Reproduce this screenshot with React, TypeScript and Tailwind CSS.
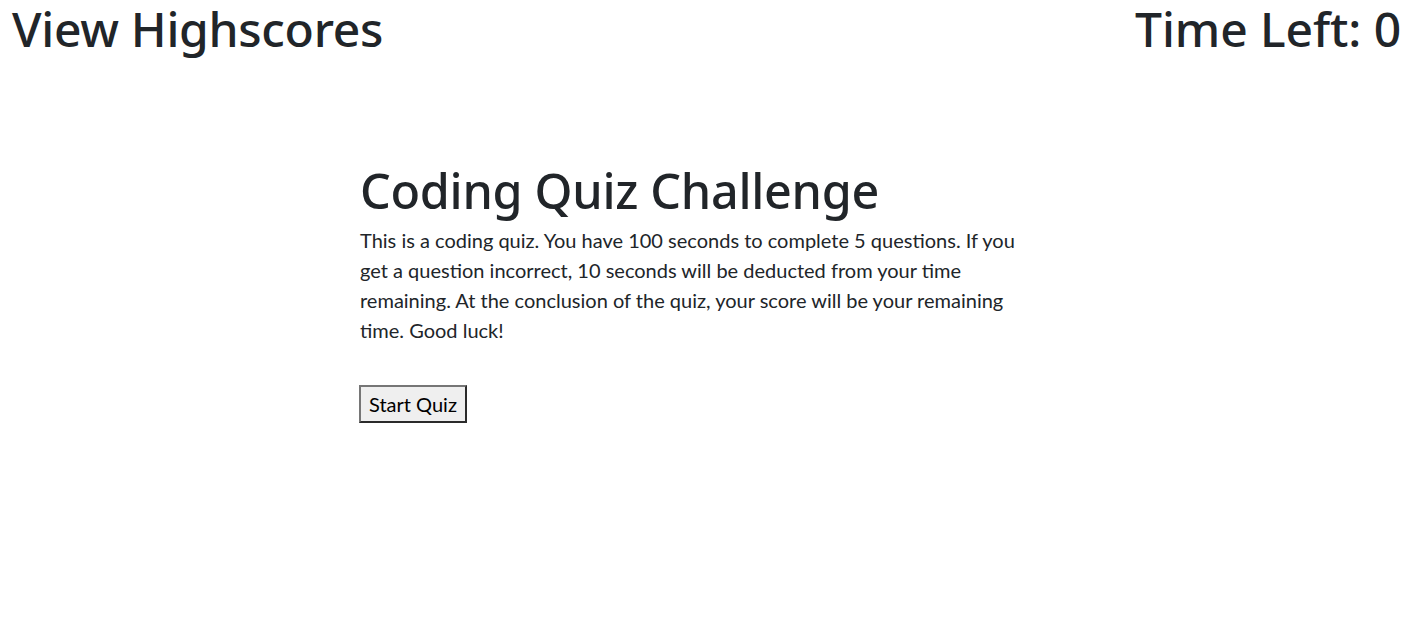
import React from 'react';

const App: React.FC = () => {
  return (
    <div className="min-h-screen bg-white text-[#212529] font-['Lato',sans-serif]">
      <header className="flex items-start justify-between px-3">
        <h1 className="font-['Noto_Sans',sans-serif] font-medium text-[48px] leading-[1.2] tracking-[-0.3px]">View Highscores</h1>
        <h1 className="font-['Noto_Sans',sans-serif] font-medium text-[48px] leading-[1.2] tracking-[-0.1px]">Time Left: 0</h1>
      </header>

      <main className="flex justify-center">
        <div className="w-[693px] pt-[103px]">
          <h1 className="font-['Noto_Sans',sans-serif] font-medium text-[48.5px] leading-[1.2] tracking-[-0.3px]">Coding Quiz Challenge</h1>
          <p className="mt-[6px] pr-[13px] text-[20px] leading-[30px]">
            This is a coding quiz. You have 100 seconds to complete 5 questions. If you get a question
            incorrect, 10 seconds will be deducted from your time remaining. At the conclusion of the
            quiz, your score will be your remaining time. Good luck!
          </p>
          <button className="mt-[40px] -ml-px px-[8px] py-[7px] text-[20px] leading-[20px] text-black bg-[#efefef] border-2 border-t-[#767676] border-l-[#767676] border-b-[#2b2b2b] border-r-[#2b2b2b]">
            Start Quiz
          </button>
        </div>
      </main>
    </div>
  );
};

export default App;
